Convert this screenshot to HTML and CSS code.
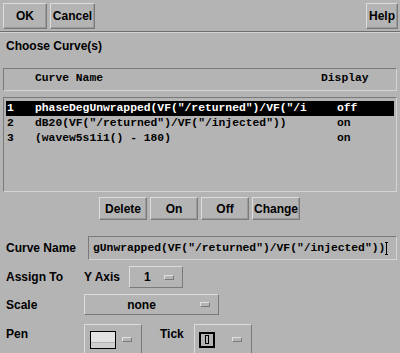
FILE: index.html
```html
<!DOCTYPE html>
<html>
<head>
  <meta charset="UTF-8" />
  <title>Choose Curve(s)</title>
  <link rel="stylesheet" href="styles.css">
</head>
<body>
  <div class="toolbar">
    <button class="btn ok">OK</button>
    <button class="btn cancel">Cancel</button>
    <span class="spacer"></span>
    <button class="btn help">Help</button>
  </div>
  <div class="sep"></div>

  <div class="title">Choose Curve(s)</div>

  <div class="list-head">
    <span class="col-num"></span>
    <span class="col-name">Curve Name</span>
    <span class="col-disp">Display</span>
  </div>
  <div class="list">
    <div class="row selected">
      <span class="col-num">1</span>
      <span class="col-name">phaseDegUnwrapped(VF("/returned")/VF("/i</span>
      <span class="col-disp">off</span>
    </div>
    <div class="row">
      <span class="col-num">2</span>
      <span class="col-name">dB20(VF("/returned")/VF("/injected"))</span>
      <span class="col-disp">on</span>
    </div>
    <div class="row">
      <span class="col-num">3</span>
      <span class="col-name">(wavew5s1i1() - 180)</span>
      <span class="col-disp">on</span>
    </div>
  </div>

  <div class="actions">
    <button class="btn act">Delete</button>
    <button class="btn act">On</button>
    <button class="btn act">Off</button>
    <button class="btn act">Change</button>
  </div>

  <div class="field name-row">
    <label>Curve Name</label>
    <div class="entry"><span class="entry-text">gUnwrapped(VF("/returned")/VF("/injected"))</span><span class="caret"></span></div>
  </div>

  <div class="field assign-row">
    <label>Assign To</label>
    <span class="sub">Y Axis</span>
    <div class="menu axis"><span class="menu-val">1</span><span class="ind"></span></div>
  </div>

  <div class="field scale-row">
    <label>Scale</label>
    <div class="menu scale"><span class="menu-val">none</span><span class="ind"></span></div>
  </div>

  <div class="field pen-row">
    <label>Pen</label>
    <div class="menu pen"><span class="swatch"><span class="swatch-low"></span></span><span class="ind"></span></div>
    <span class="tick-label">Tick</span>
    <div class="menu tick"><span class="tick-box"><span class="tick-bar"></span></span><span class="ind"></span></div>
  </div>
</body>
</html>
```

FILE: styles.css
```css
* {
  box-sizing: border-box;
}

body {
  margin: 0;
  width: 400px;
  height: 353px;
  overflow: hidden;
  background: #b4b4b4;
  color: #000;
  font: bold 12px "Liberation Sans", Arial, sans-serif;
}

.btn {
  font: bold 12px "Liberation Sans", Arial, sans-serif;
  color: #000;
  background: #b4b4b4;
  border: 1px solid;
  border-color: #dcdcdc #7a7a7a #7a7a7a #dcdcdc;
  box-shadow: inset -1px -1px 0 #9a9a9a;
  padding: 0;
}

.toolbar {
  display: flex;
  gap: 3px;
  padding: 3px 2px 2px 3px;
  height: 31px;
}

.toolbar .btn { height: 26px; }
.ok { width: 44px; }
.cancel { width: 45px; }
.help { width: 32px; }
.spacer { flex: 1; }

.sep {
  height: 2px;
  border-top: 1px solid #6e6e6e;
  border-bottom: 1px solid #d4d4d4;
}

.title {
  height: 35px;
  padding: 6px 0 0 6px;
}

.list-head,
.row {
  display: flex;
  font: bold 11.33px "Liberation Mono", "Courier New", monospace;
  white-space: pre;
}

.col-num { width: 28px; }
.col-name { width: 302px; }
.col-disp { flex: 1; }

.list-head {
  margin: 0 3px;
  height: 23px;
  padding: 3px 0 0 3px;
  border: 1px solid;
  border-color: #7a7a7a #d4d4d4 #d4d4d4 #7a7a7a;
}

.list-head .col-disp { margin-left: -16px; }

.list {
  margin: 6px 3px 0;
  height: 95px;
  padding: 3px 2px;
  border: 1px solid;
  border-color: #7a7a7a #d4d4d4 #d4d4d4 #7a7a7a;
}

.row {
  height: 15px;
  line-height: 13px;
  padding: 1px 0 0 1px;
}

.row.selected {
  background: #000;
  color: #fff;
}

.actions {
  display: flex;
  justify-content: center;
  gap: 3px;
  margin-top: 5px;
  padding-right: 1px;
}

.act {
  width: 48px;
  height: 23px;
}

.field {
  display: flex;
  align-items: center;
  padding-left: 6px;
}

.field label {
  width: 78px;
}

.name-row {
  margin-top: 16px;
  height: 24px;
}

.entry {
  margin-left: 4px;
  width: 309px;
  height: 24px;
  display: flex;
  align-items: center;
  padding-left: 4px;
  border: 1px solid;
  border-color: #7a7a7a #d4d4d4 #d4d4d4 #7a7a7a;
  font: bold 11.33px "Liberation Mono", "Courier New", monospace;
  white-space: pre;
  overflow: hidden;
}

.caret {
  width: 3px;
  height: 13px;
  border: 1px solid #000;
  border-width: 1px 0;
  background: linear-gradient(#000, #000) center / 1px 100% no-repeat;
}

.assign-row {
  margin-top: 6px;
  height: 22px;
}

.sub {
  width: 45px;
}

.menu {
  display: flex;
  align-items: center;
  border: 1px solid;
  border-color: #dcdcdc #7a7a7a #7a7a7a #dcdcdc;
}

.ind {
  width: 10px;
  height: 5px;
  border: 1px solid;
  border-color: #e0e0e0 #7a7a7a #7a7a7a #e0e0e0;
  background: #b4b4b4;
}

.axis {
  width: 54px;
  height: 22px;
  padding: 0 8px 0 14px;
  justify-content: space-between;
}

.scale-row {
  margin-top: 6px;
  height: 21px;
}

.scale {
  width: 135px;
  height: 21px;
  padding: 0 8px;
}

.scale .menu-val {
  flex: 1;
  text-align: center;
  padding-right: 10px;
}

.pen-row {
  margin-top: 9px;
  height: 32px;
  align-items: flex-start;
}

.pen-row label,
.tick-label {
  padding-top: 3px;
}

.pen {
  width: 58px;
  height: 31px;
  padding: 0 9px 0 5px;
  justify-content: space-between;
}

.swatch {
  width: 26px;
  height: 18px;
  border: 1px solid #000;
  background: #e2e2e2;
  display: flex;
  align-items: flex-end;
}

.swatch-low {
  width: 100%;
  height: 6px;
  border-top: 1px solid #b4b4b4;
  background: #cfcfcf;
}

.tick-label {
  margin-left: 18px;
  width: 34px;
}

.tick {
  width: 58px;
  height: 31px;
  padding: 0 9px 0 4px;
  justify-content: space-between;
}

.tick-box {
  width: 16px;
  height: 16px;
  border: 2px solid #000;
  display: flex;
  align-items: center;
  justify-content: center;
}

.tick-bar {
  width: 4px;
  height: 9px;
  border: 1px solid #000;
}
```
